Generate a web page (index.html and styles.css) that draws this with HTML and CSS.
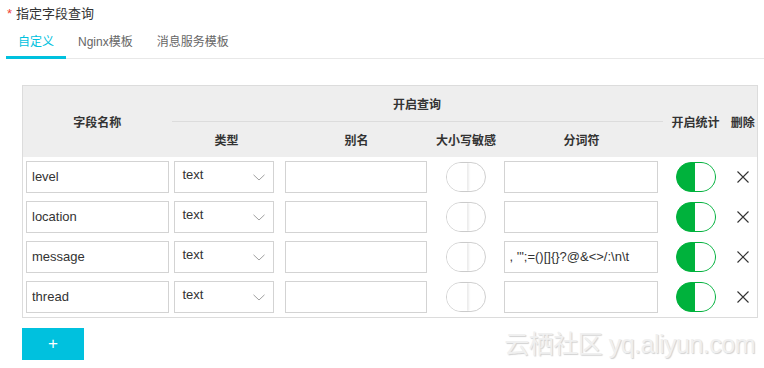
FILE: index.html
```html
<!DOCTYPE html>
<html lang="zh">
<head>
<meta charset="utf-8">
<title>指定字段查询</title>
<link rel="stylesheet" href="styles.css">
</head>
<body>
<div class="page">
  <div class="title"><span class="req">*</span>指定字段查询</div>
  <div class="tabs">
    <div class="tab active">自定义</div>
    <div class="tab">Nginx模板</div>
    <div class="tab">消息服务模板</div>
  </div>
  <table class="fields">
    <colgroup>
      <col class="c-name"><col class="c-type"><col class="c-alias"><col class="c-case"><col class="c-token"><col class="c-stat"><col class="c-del">
    </colgroup>
    <thead>
      <tr class="h1">
        <th rowspan="2">字段名称</th>
        <th colspan="4" class="group">开启查询</th>
        <th rowspan="2">开启统计</th>
        <th rowspan="2">删除</th>
      </tr>
      <tr class="h2">
        <th>类型</th><th>别名</th><th>大小写敏感</th><th>分词符</th>
      </tr>
    </thead>
    <tbody>
      <tr>
        <td class="name"><input class="inp" type="text" value="level"></td>
        <td><div class="sel"><span>text</span><svg class="chev" width="12" height="7" viewBox="0 0 12 7"><path d="M0.5 0.8 L6 6 L11.5 0.8" fill="none" stroke="#a0a0a0" stroke-width="1"/></svg></div></td>
        <td><input class="inp" type="text" value=""></td>
        <td class="mid"><span class="sw off"><span class="knob"></span></span></td>
        <td><input class="inp" type="text" value=""></td>
        <td class="mid"><span class="sw on"><span class="knob"></span></span></td>
        <td class="mid"><svg class="del" width="12" height="12" viewBox="0 0 12 12"><path d="M0.5 0.5 L11.5 11.5 M11.5 0.5 L0.5 11.5" stroke="#333" stroke-width="1.1"/></svg></td>
      </tr>
      <tr>
        <td class="name"><input class="inp" type="text" value="location"></td>
        <td><div class="sel"><span>text</span><svg class="chev" width="12" height="7" viewBox="0 0 12 7"><path d="M0.5 0.8 L6 6 L11.5 0.8" fill="none" stroke="#a0a0a0" stroke-width="1"/></svg></div></td>
        <td><input class="inp" type="text" value=""></td>
        <td class="mid"><span class="sw off"><span class="knob"></span></span></td>
        <td><input class="inp" type="text" value=""></td>
        <td class="mid"><span class="sw on"><span class="knob"></span></span></td>
        <td class="mid"><svg class="del" width="12" height="12" viewBox="0 0 12 12"><path d="M0.5 0.5 L11.5 11.5 M11.5 0.5 L0.5 11.5" stroke="#333" stroke-width="1.1"/></svg></td>
      </tr>
      <tr>
        <td class="name"><input class="inp" type="text" value="message"></td>
        <td><div class="sel"><span>text</span><svg class="chev" width="12" height="7" viewBox="0 0 12 7"><path d="M0.5 0.8 L6 6 L11.5 0.8" fill="none" stroke="#a0a0a0" stroke-width="1"/></svg></div></td>
        <td><input class="inp" type="text" value=""></td>
        <td class="mid"><span class="sw off"><span class="knob"></span></span></td>
        <td><input class="inp" type="text" value=", '&quot;;=()[]{}?@&amp;&lt;&gt;/:\n\t"></td>
        <td class="mid"><span class="sw on"><span class="knob"></span></span></td>
        <td class="mid"><svg class="del" width="12" height="12" viewBox="0 0 12 12"><path d="M0.5 0.5 L11.5 11.5 M11.5 0.5 L0.5 11.5" stroke="#333" stroke-width="1.1"/></svg></td>
      </tr>
      <tr>
        <td class="name"><input class="inp" type="text" value="thread"></td>
        <td><div class="sel"><span>text</span><svg class="chev" width="12" height="7" viewBox="0 0 12 7"><path d="M0.5 0.8 L6 6 L11.5 0.8" fill="none" stroke="#a0a0a0" stroke-width="1"/></svg></div></td>
        <td><input class="inp" type="text" value=""></td>
        <td class="mid"><span class="sw off"><span class="knob"></span></span></td>
        <td><input class="inp" type="text" value=""></td>
        <td class="mid"><span class="sw on"><span class="knob"></span></span></td>
        <td class="mid"><svg class="del" width="12" height="12" viewBox="0 0 12 12"><path d="M0.5 0.5 L11.5 11.5 M11.5 0.5 L0.5 11.5" stroke="#333" stroke-width="1.1"/></svg></td>
      </tr>
    </tbody>
  </table>
  <div class="footer">
    <button class="add" type="button">+</button>
  </div>
  <div class="watermark">云栖社区 yq.aliyun.com</div>
</div>
</body>
</html>
```

FILE: styles.css
```css
html, body {
  margin: 0;
  padding: 0;
  background: #fff;
}
body {
  font-family: "Liberation Sans", "Noto Sans CJK SC", sans-serif;
  color: #333;
  width: 764px;
  height: 368px;
  overflow: hidden;
}
.page {
  position: relative;
  height: 368px;
  padding: 5px 0 0 6px;
  box-sizing: border-box;
}
.title {
  font-size: 13px;
  line-height: 18px;
  height: 18px;
  color: #333;
  padding-left: 1px;
}
.req {
  color: #f04134;
  margin-right: 4px;
  font-size: 13px;
}
.tabs {
  display: flex;
  margin-top: 6px;
  height: 29px;
  border-bottom: 1px solid #e8e8e8;
}
.tab {
  font-size: 12px;
  line-height: 27px;
  height: 27px;
  padding: 0 12px;
  color: #666;
  border-bottom: 3px solid transparent;
  margin-bottom: -1px;
}
.tab.active {
  color: #00c1de;
  border-bottom-color: #00c1de;
}
.fields {
  margin: 26px 0 0 16px;
  width: 735px;
  border-collapse: collapse;
  table-layout: fixed;
  border: 1px solid #dcdcdc;
}
.c-name { width: 149px; }
.c-type { width: 110px; }
.c-alias { width: 150px; }
.c-case { width: 69px; }
.c-token { width: 162px; }
.c-stat { width: 66px; }
.c-del { width: 29px; }
.fields thead {
  background: #eeeeee;
}
.fields th {
  font-size: 12px;
  font-weight: bold;
  color: #333;
  padding: 0;
  text-align: center;
  white-space: nowrap;
}
.fields tr.h1 { height: 36px; }
.fields tr.h2 { height: 35px; }
.fields th.group {
  border-bottom: 1px solid #dcdcdc;
}
.fields tbody tr { height: 40px; }
.fields td {
  padding: 4px 5px 4px 3px;
  vertical-align: middle;
}
.fields td.name {
  padding: 4px 3px 4px 3px;
}
.fields td.mid {
  text-align: center;
  padding: 4px 0;
}
.inp {
  display: block;
  width: 100%;
  height: 32px;
  box-sizing: border-box;
  border: 1px solid #d3d3d3;
  border-radius: 0;
  padding: 0 5px;
  font-family: "Liberation Sans", "Noto Sans CJK SC", sans-serif;
  font-size: 13px;
  color: #333;
  background: #fff;
  outline: none;
}
.sel {
  display: flex;
  align-items: flex-start;
  justify-content: space-between;
  width: 100px;
  height: 32px;
  box-sizing: border-box;
  border: 1px solid #d3d3d3;
  padding: 0 8px 0 8px;
  margin-left: -1px;
  font-size: 13px;
  line-height: 25px;
  background: #fff;
}
.chev {
  margin-top: 12px;
  display: block;
}
.sw {
  display: inline-block;
  position: relative;
  width: 40px;
  height: 30px;
  border-radius: 15px;
  box-sizing: border-box;
  vertical-align: middle;
}
.sw.off {
  border: 1px solid #d0d0d0;
  background: #fff;
}
.sw.on {
  border: 1px solid #00b23c;
  background: #00b23c;
}
.sw .knob {
  position: absolute;
  top: 0;
  width: 20px;
  height: 28px;
  background: #fff;
}
.sw.off .knob {
  left: 0;
  border-radius: 14px 0 0 14px;
  box-shadow: 2px 0 2px rgba(0, 0, 0, 0.08);
}
.sw.on .knob {
  right: 0;
  border-radius: 0 14px 14px 0;
}
.del {
  display: inline-block;
  vertical-align: middle;
}
.footer {
  margin: 10px 0 0 16px;
}
.add {
  display: block;
  width: 62px;
  height: 32px;
  border: none;
  background: #00c1de;
  color: #fff;
  font-family: "Liberation Sans", sans-serif;
  font-size: 17px;
  line-height: 32px;
  padding: 0;
}
.watermark {
  position: absolute;
  right: 9px;
  bottom: 8px;
  font-family: "Liberation Sans", "Noto Sans CJK SC", sans-serif;
  font-size: 25px;
  letter-spacing: -0.5px;
  color: #f0f0f0;
  text-shadow: 1px 1px 1px #d2d2d2;
}
```
